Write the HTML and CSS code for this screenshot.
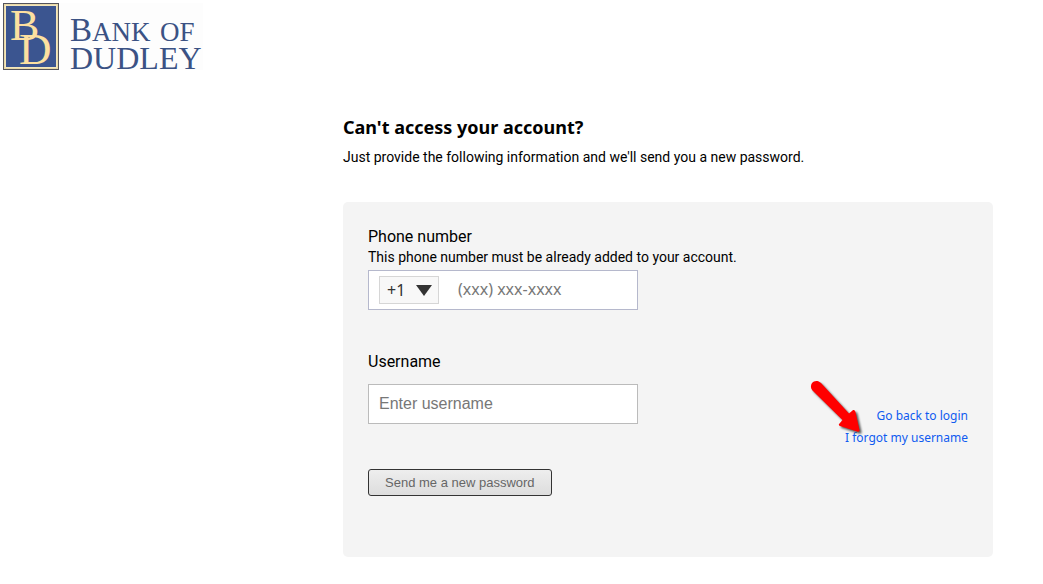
FILE: index.html
```html
<!DOCTYPE html>
<html lang="en">
<head>
<meta charset="utf-8">
<meta name="viewport" content="width=device-width, initial-scale=1">
<title>Bank of Dudley - Account access</title>
<link rel="stylesheet" href="styles.css">
</head>
<body>
<header class="site-header">
  <svg class="logo" viewBox="0 0 204 72" role="img" aria-label="Bank of Dudley">
    <rect x="60" y="3" width="143" height="67" fill="#fdfdfd"/>
    <rect x="3" y="3" width="56" height="67" fill="#54545c"/>
    <rect x="4" y="4" width="54" height="65" fill="#e8d9a8"/>
    <rect x="5" y="5" width="52" height="63" fill="#f3e6bd"/>
    <rect x="6" y="6" width="50" height="61" fill="#3b5590"/>
    <g class="logo-letters mono">
      <text x="10" y="40" font-size="44">B</text>
      <text x="19" y="64" font-size="45">D</text>
    </g>
    <g class="logo-letters name">
      <text x="70" y="41" font-size="33">B</text>
      <text x="92" y="41" font-size="27">ANK</text>
      <text x="160" y="41" font-size="27">OF</text>
      <text x="70" y="69" font-size="32">DUDLEY</text>
    </g>
  </svg>
</header>
<main class="recovery">
  <h1 class="title">Can't access your account?</h1>
  <p class="intro">Just provide the following information and we'll send you a new password.</p>
  <form class="panel">
    <div class="fields">
      <label class="label" for="phone">Phone number</label>
      <p class="hint" id="phone-hint">This phone number must be already added to your account.</p>
      <div class="field phone-field">
        <div class="country">
          <select class="country-select" aria-label="Country code"><option>+1</option></select>
          <svg class="caret" viewBox="0 0 16 11" aria-hidden="true"><path d="M0 0H16L8 11Z" fill="#333"/></svg>
        </div>
        <input class="phone-input" id="phone" type="tel" placeholder="(xxx) xxx-xxxx" aria-describedby="phone-hint">
      </div>
      <label class="label username-label" for="username">Username</label>
      <input class="field username-input" id="username" type="text" placeholder="Enter username">
      <button class="submit" type="button">Send me a new password</button>
    </div>
    <nav class="links" aria-label="Account help">
      <a href="#login">Go back to login</a>
      <a href="#username">I forgot my username</a>
      <svg class="arrow" viewBox="0 0 60 64" aria-hidden="true">
        <path class="arrow-shape" d="M10 10C12 7.500 16 7 19 10L47 40.500L50.500 37.500C52 36.500 53 37.500 53.500 39L57.500 57C57.500 58.500 57 59 55 58.500L38 53C36.500 52.500 36.500 51.500 37.500 50.500L40.500 47L10.500 17.500C8.500 15.500 8.500 12 10 10Z"/>
      </svg>
    </nav>
  </form>
</main>
</body>
</html>
```
FILE: styles.css
```css
* {
  box-sizing: border-box;
}

body {
  margin: 0;
  background: #fff;
  color: #000;
  font-family: Tahoma, Roboto, sans-serif;
  font-size: 14px;
  line-height: 20px;
}

.logo {
  display: block;
  width: 204px;
  height: 72px;
}

.logo-letters {
  font-family: "Liberation Serif", serif;
}

.mono {
  fill: #fce0a0;
}

.name {
  fill: #3b5284;
}

.recovery {
  max-width: 700px;
  margin: 43px 0 0 auto;
  padding: 0 50px 27px 0;
}

.title {
  margin: 0;
  font-family: Tahoma, "Noto Sans", sans-serif;
  font-size: 18px;
  line-height: 24px;
}

.intro {
  margin: 8px 0 35px;
}

.panel {
  display: flex;
  justify-content: space-between;
  align-items: flex-start;
  padding: 25px 25px 61px;
  border-radius: 5px;
  background: #f4f4f4;
}

.fields {
  display: flex;
  flex-direction: column;
  align-items: flex-start;
}

.label {
  font-size: 16px;
}

.hint {
  margin: 0 0 3px;
}

.field {
  width: 270px;
  height: 40px;
  border: 1px solid #bbb;
  background: #fff;
}

.phone-field {
  display: flex;
  align-items: center;
  padding: 0 10px;
  border-color: #b5b8cc;
}

.country {
  display: grid;
  align-items: center;
  flex: none;
  width: 60px;
  height: 28px;
  margin-right: 17px;
}

.country-select,
.caret {
  grid-area: 1 / 1;
}

.country-select {
  width: 60px;
  height: 28px;
  padding: 0 7px;
  border: 1px solid #d6d6d6;
  border-radius: 0;
  background: #f8f8f8;
  color: #333;
  font: 16px Tahoma, "Noto Sans", sans-serif;
  appearance: none;
}

.caret {
  justify-self: end;
  width: 16px;
  height: 11px;
  margin-right: 7px;
  pointer-events: none;
}

.phone-input {
  flex: 1;
  min-width: 0;
  padding: 0 2px 2px;
  border: 0;
  background: transparent;
  font: 16px Tahoma, "Noto Sans", sans-serif;
}

.username-label {
  margin: 42px 0 12px;
}

.username-input {
  padding: 0 10px;
  font: 16px "Liberation Sans", Arial, sans-serif;
}

::placeholder {
  color: #777;
  opacity: 1;
}

.submit {
  height: 27px;
  margin-top: 45px;
  padding: 0 16px;
  border: 1px solid #333;
  border-radius: 3px;
  background: linear-gradient(#eee, #ddd);
  color: #666;
  font: 13px "Liberation Sans", Arial, sans-serif;
}

.links {
  position: relative;
  display: flex;
  flex-direction: column;
  align-items: flex-end;
  align-self: flex-end;
  gap: 2px;
  margin-bottom: 48px;
  font-family: Tahoma, "Noto Sans", sans-serif;
  font-size: 12px;
}

.links a {
  color: #0f5bf0;
  text-decoration: none;
}

.arrow {
  position: absolute;
  bottom: 11px;
  right: 106px;
  width: 60px;
  height: 64px;
  overflow: visible;
  pointer-events: none;
}

.arrow-shape {
  fill: #f00;
  filter: drop-shadow(2px 2px 1px #555);
}
```
